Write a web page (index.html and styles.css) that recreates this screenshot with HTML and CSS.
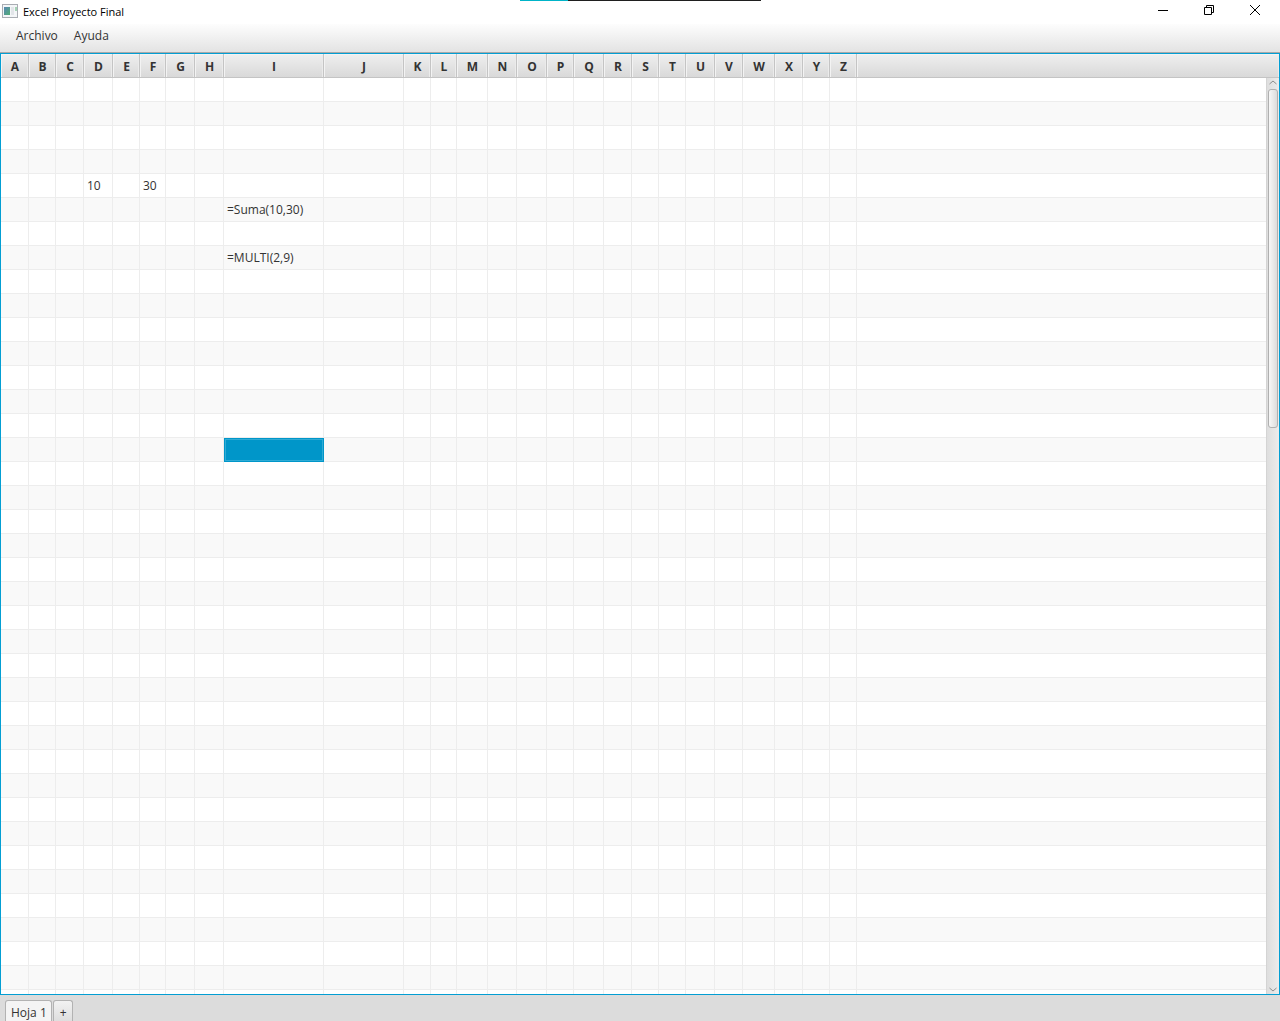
FILE: index.html
```html
<!DOCTYPE html>
<html lang="es">
<head>
<meta charset="utf-8">
<title>Excel Proyecto Final</title>
<link rel="stylesheet" href="styles.css">
</head>
<body>
<header class="titlebar">
  <span class="progress"></span>
  <svg class="app-icon" width="16" height="14" viewBox="0 0 16 14" aria-hidden="true">
    <defs>
      <linearGradient id="pane" x1="0" y1="0" x2="1" y2="1">
        <stop offset="0" stop-color="#5a86b4"/><stop offset="1" stop-color="#4fae74"/>
      </linearGradient>
    </defs>
    <rect x="0.5" y="0.5" width="15" height="13" fill="#f4f6f8" stroke="#a9adb3"/>
    <rect x="2" y="3" width="6" height="8" fill="url(#pane)"/>
    <rect x="9" y="3" width="3" height="8" fill="#e2e5e9"/>
    <rect x="13" y="3" width="2" height="4" fill="#a4d3b5"/>
  </svg>
  <h1 class="title">Excel Proyecto Final</h1>
  <div class="window-buttons">
    <button class="window-button" aria-label="Minimizar"><svg width="10" height="10" viewBox="0 0 10 10"><path d="M0 5.5H10"/></svg></button>
    <button class="window-button" aria-label="Restaurar"><svg width="10" height="10" viewBox="0 0 10 10"><path d="M0.5 2.5H7.5V9.5H0.5ZM2.5 2.5V0.5H9.5V7.5H7.5"/></svg></button>
    <button class="window-button" aria-label="Cerrar"><svg width="10" height="10" viewBox="0 0 10 10"><path d="M0 0L10 10M10 0L0 10"/></svg></button>
  </div>
</header>
<nav class="menubar">
  <button class="menu">Archivo</button>
  <button class="menu">Ayuda</button>
</nav>
<main class="sheet">
  <table class="grid" id="grid"></table>
  <div class="scrollbar" aria-hidden="true">
    <svg class="arrow" width="8" height="5" viewBox="0 0 8 5"><path d="M0.5 4L4 1L7.5 4"/></svg>
    <div class="track"><div class="thumb"></div></div>
    <svg class="arrow" width="8" height="5" viewBox="0 0 8 5"><path d="M0.5 1L4 4L7.5 1"/></svg>
  </div>
</main>
<footer class="tabs">
  <button class="tab active">Hoja 1</button>
  <button class="tab add">+</button>
</footer>
<script src="grid.js"></script>
</body>
</html>
```
FILE: styles.css
```css
* { box-sizing: border-box; }

body {
  margin: 0;
  height: 100vh;
  display: flex;
  flex-direction: column;
  overflow: hidden;
  background: #fff;
  color: #333;
  font: 12px/16px "Open Sans", "Noto Sans", sans-serif;
}

button {
  margin: 0;
  padding: 0;
  border: 0;
  background: none;
  color: inherit;
  font: inherit;
}

.titlebar {
  position: relative;
  display: flex;
  align-items: center;
  flex: none;
  height: 24px;
  padding-left: 2px;
  gap: 5px;
}

.progress {
  position: absolute;
  top: 0;
  left: 520px;
  width: 241px;
  height: 1px;
  background: linear-gradient(90deg, #00b4c8 48px, #1f1f1f 48px);
}

.app-icon { margin-bottom: 2px; }

.title {
  flex: 1;
  margin: 0;
  color: #000;
  font-size: 11px;
  font-weight: 400;
}

.window-buttons {
  display: flex;
  align-self: flex-start;
  padding-right: 2px;
}

.window-button {
  display: flex;
  align-items: center;
  justify-content: center;
  width: 46px;
  height: 20px;
}

.window-button svg {
  fill: none;
  stroke: #000;
}

.menubar {
  display: flex;
  flex: none;
  height: 29px;
  padding: 0 8px 4px;
  border-bottom: 1px solid #a9a9a9;
  background: linear-gradient(#fdfdfd, #e3e3e3);
}

.menu { padding: 0 8px; }

.sheet {
  position: relative;
  flex: 1;
  min-height: 0;
  overflow: hidden;
  border: 1px solid #039ed3;
}

.grid {
  width: 100%;
  table-layout: fixed;
  border-collapse: separate;
  border-spacing: 0;
}

.grid th,
.grid td {
  height: 24px;
  padding: 0 3px;
  border: solid #ededed;
  border-width: 0 1px 1px 0;
  text-align: left;
  white-space: nowrap;
}

.grid th {
  padding: 2px 0 0 1px;
  border-color: #c4c4c4;
  background: linear-gradient(#efefef, #d9d9d9);
  box-shadow: inset 1px 1px #f3f3f3, inset -1px 0 #ebebeb;
  text-align: center;
}

.grid .rest { border-right: 0; }
.grid tbody tr:nth-child(even) { background: #f9f9f9; }

.grid .selected {
  border-color: #0096c9;
  background: #0096c9;
  box-shadow: inset 1px 1px #0096c9, inset 0 0 0 1px #30abd5, inset 2px 2px #30abd5;
}

.scrollbar {
  position: absolute;
  top: 24px;
  right: 0;
  bottom: 0;
  display: flex;
  flex-direction: column;
  align-items: center;
  width: 13px;
  padding: 2px 0;
  border-left: 1px solid #d4d4d4;
  background: linear-gradient(90deg, #dedede, #ececec);
}

.arrow {
  flex: none;
  fill: none;
  stroke: #8c8c8c;
  stroke-width: 1;
}

.track {
  flex: 1;
  width: 10px;
  padding: 4px 0 6px;
}

.thumb {
  height: 38%;
  border: 1px solid #b0b0b0;
  border-radius: 3px;
  background: linear-gradient(90deg, #f7f7f7, #dcdcdc);
}

.tabs {
  display: flex;
  flex: none;
  gap: 1px;
  height: 26px;
  padding: 5px 5px 0;
  background: #dcdcdc;
}

.tab {
  padding: 3px 4px 0 5px;
  border: 1px solid #b2b2b2;
  border-bottom: 0;
  border-radius: 3px 3px 0 0;
  background: linear-gradient(#f2f2f2, #dedede);
}

.tab.active { background: #f4f4f4; }
.tab.add { width: 20px; }
```
FILE: grid.js
```js
const widths = [28, 27, 28, 29, 27, 26, 29, 29, 100, 80, 27, 26, 31,
                29, 30, 27, 30, 28, 27, 27, 29, 28, 32, 28, 27, 27];
const letters = [...'ABCDEFGHIJKLMNOPQRSTUVWXYZ'];
const rowCount = 100;
const values = { D5: '10', F5: '30', I6: '=Suma(10,30)', I8: '=MULTI(2,9)' };
const selected = 'I16';

const cols = widths.map(w => `<col style="width:${w}px">`).join('');
const head = letters.map(l => `<th scope="col">${l}</th>`).join('');
let rows = '';
for (let r = 1; r <= rowCount; r++) {
  const cells = letters.map(l => {
    const id = l + r;
    return `<td${id === selected ? ' class="selected"' : ''}>${values[id] || ''}</td>`;
  }).join('');
  rows += `<tr>${cells}<td class="rest"></td></tr>`;
}
document.getElementById('grid').innerHTML =
  `<colgroup>${cols}<col></colgroup>` +
  `<thead><tr>${head}<th class="rest"></th></tr></thead><tbody>${rows}</tbody>`;
```
